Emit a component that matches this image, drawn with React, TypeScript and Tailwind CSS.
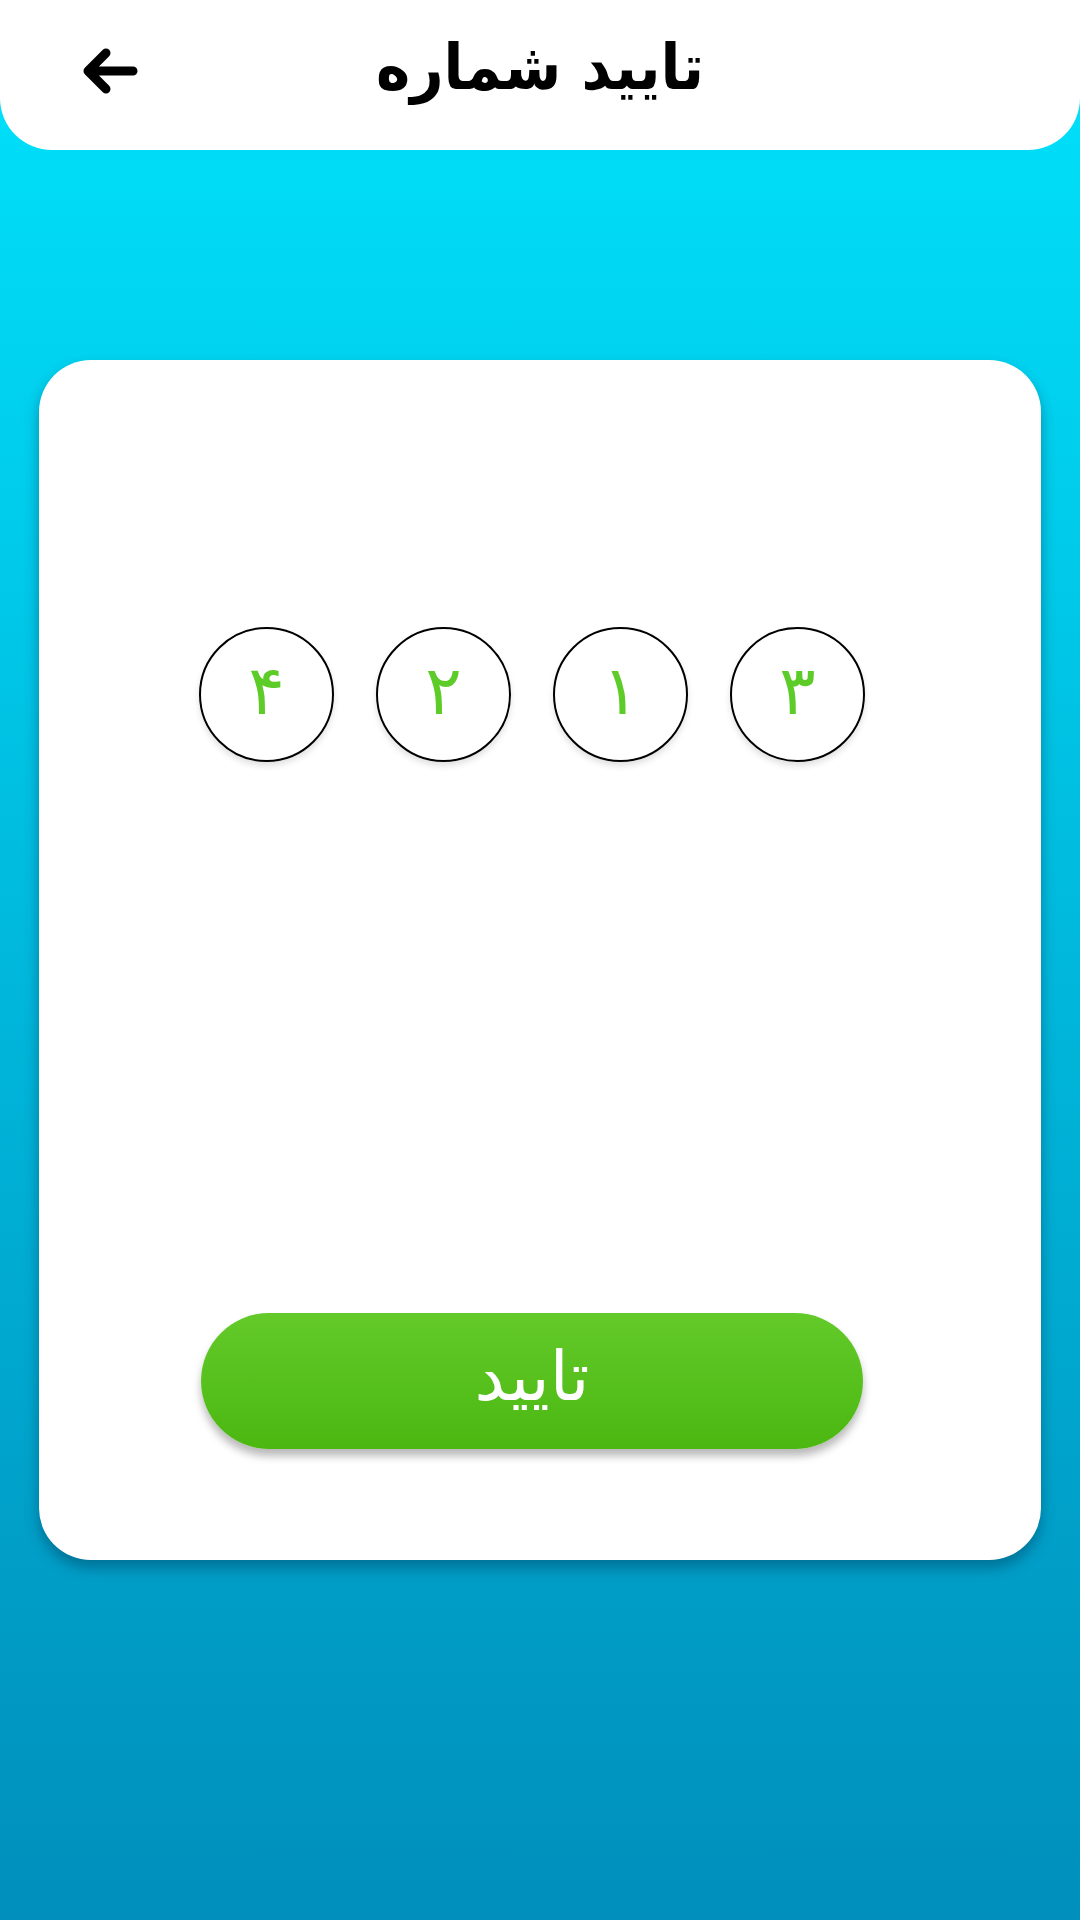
const digits = ["۴", "۲", "۱", "۳"];

const BackArrow = () => (
  <svg width="58" height="46" viewBox="0 0 58 46" fill="none">
    <path
      d="M52 23H7M25 5L7 23l18 18"
      stroke="#000"
      strokeWidth="9"
      strokeLinecap="round"
      strokeLinejoin="round"
    />
  </svg>
);

const App = () => {
  return (
    <div className="w-[1080px] min-h-[1920px] flex flex-col bg-gradient-to-b from-[#00e3fc] to-[#008fbc] font-['DejaVu_Sans',sans-serif]">
      {/* Header */}
      <div className="h-[150px] bg-white rounded-b-[52px] grid grid-cols-[1fr_auto_1fr] items-center">
        <div className="pl-[81px] pb-[8px]">
          <BackArrow />
        </div>
        <h1 dir="rtl" className="text-[58px] font-bold text-black leading-none pb-[14px] scale-y-110">
          تایید شماره
        </h1>
        <div />
      </div>

      {/* Card */}
      <div className="mt-[210px] mx-[39px] h-[1200px] bg-white rounded-[52px] shadow-[0_8px_14px_rgba(0,60,90,0.45)] flex flex-col items-center pr-[16px]">
        <div className="mt-[267px] flex gap-[42px]">
          {digits.map((d, i) => (
            <div
              key={i}
              className="w-[135px] h-[135px] rounded-full border-2 border-black flex items-center justify-center shadow-[0_4px_6px_rgba(0,0,0,0.12)]"
            >
              <span className="text-[68px] leading-none text-[#5dcc28] pb-[8px]">{d}</span>
            </div>
          ))}
        </div>

        <button
          dir="rtl"
          className="mt-[551px] w-[662px] h-[136px] rounded-full bg-gradient-to-b from-[#63ca29] to-[#4bb70f] shadow-[0_7px_8px_rgba(0,0,0,0.28)] text-white text-[68px] leading-none pb-[8px]"
        >
          تایید
        </button>
      </div>
    </div>
  );
};

export default App;
